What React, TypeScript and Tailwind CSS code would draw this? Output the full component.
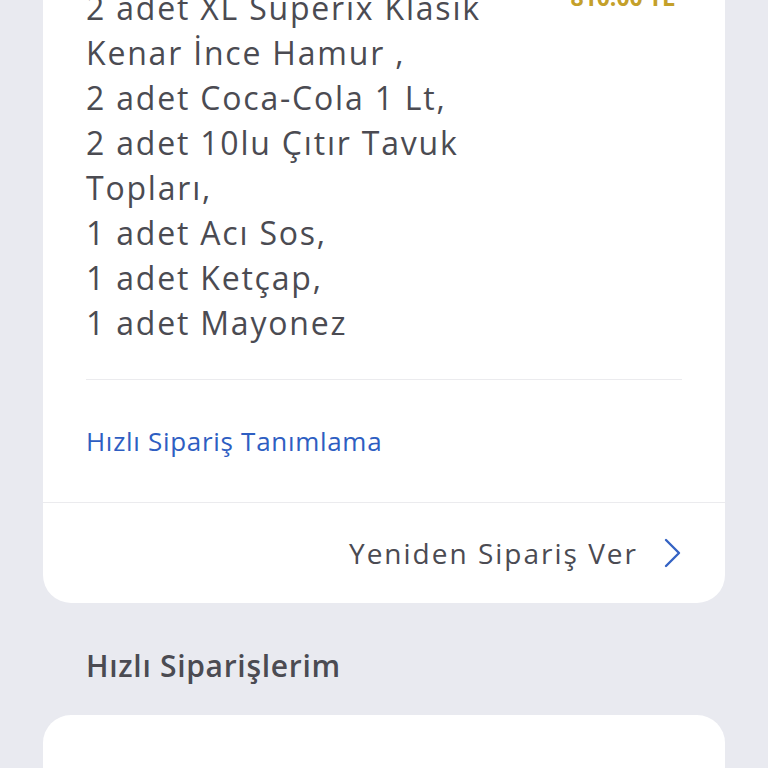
export default function App() {
  const lines = [
    "2 adet XL Superix Klasik",
    "Kenar İnce Hamur ,",
    "2 adet Coca-Cola 1 Lt,",
    "2 adet 10lu Çıtır Tavuk",
    "Topları,",
    "1 adet Acı Sos,",
    "1 adet Ketçap,",
    "1 adet Mayonez",
  ];

  return (
    <div
      className="h-[768px] w-full overflow-hidden bg-[#e9eaf0] px-[43px] text-[#4b4b52]"
      style={{ fontFamily: "'Open Sans', sans-serif" }}
    >
      <div className="-mt-[57px] rounded-[28px] bg-white">
        <div className="px-[43px] pt-[42px]">
          <div className="flex items-start justify-between">
            <div className="text-[32px] leading-[45px] tracking-[1.8px]">
              {lines.map((line) => (
                <div key={line}>{line}</div>
              ))}
            </div>
            <div className="-mt-[10px] pr-[7px] text-[23px] font-bold leading-[45px] text-[#c4a02a]">
              810.00 TL
            </div>
          </div>
          <div className="mt-[34px] h-px bg-[#ebebee]" />
          <div className="py-[43px] text-[26px] leading-[36px] tracking-[0.7px] text-[#2e5ec2]">
            Hızlı Sipariş Tanımlama
          </div>
        </div>
        <div className="h-px bg-[#ebebee]" />
        <div className="flex h-[100px] items-center justify-end gap-[26px] pr-[43px]">
          <span className="text-[28px] leading-[40px] tracking-[2px]">Yeniden Sipariş Ver</span>
          <svg width="18" height="30" viewBox="0 0 18 30" fill="none">
            <path
              d="M2 2 L15 15 L2 28"
              stroke="#3563c4"
              strokeWidth="2.4"
              strokeLinecap="round"
              strokeLinejoin="round"
            />
          </svg>
        </div>
      </div>
      <div className="px-[43px] pt-[45px] pb-[31px] text-[30px] font-semibold leading-[36px] tracking-[0.7px]">
        Hızlı Siparişlerim
      </div>
      <div className="rounded-[28px] bg-white px-[43px] pt-[44px]">
        <div className="text-[32px] leading-[45px] tracking-[1.8px]">1 adet Hızlı Sipariş Menüsü</div>
      </div>
    </div>
  );
}
